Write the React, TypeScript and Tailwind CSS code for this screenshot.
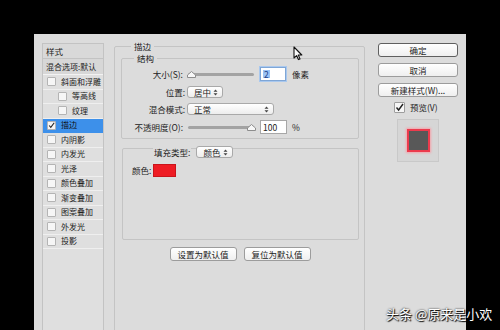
import React from 'react';

type LayerStyle = { label: string; indent?: boolean; checked?: boolean; active?: boolean };

const layerStyles: LayerStyle[] = [
  { label: '斜面和浮雕' },
  { label: '等高线', indent: true },
  { label: '纹理', indent: true },
  { label: '描边', checked: true, active: true },
  { label: '内阴影' },
  { label: '内发光' },
  { label: '光泽' },
  { label: '颜色叠加' },
  { label: '渐变叠加' },
  { label: '图案叠加' },
  { label: '外发光' },
  { label: '投影' },
];

const CheckMark = () => (
  <svg width="9" height="9" viewBox="0 0 9 9" className="block">
    <path d="M1.5 4.5 L3.6 7 L8 1" fill="none" stroke="#222" strokeWidth="1.4" />
  </svg>
);

const Checkbox = ({ checked }: { checked?: boolean }) => (
  <span className="w-[9px] h-[9px] shrink-0 flex items-center justify-center border border-[#b4b4b4] bg-[#f6f6f6] rounded-[1px]">
    {checked && <CheckMark />}
  </span>
);

const UpDown = () => (
  <svg width="5" height="7" viewBox="0 0 5 7" className="block">
    <path d="M2.5 0.5 L4.5 2.8 L0.5 2.8 Z M2.5 6.5 L4.5 4.2 L0.5 4.2 Z" fill="#444" />
  </svg>
);

const Select = ({ value, className }: { value: string; className: string }) => (
  <div
    className={`h-[12px] flex items-center justify-between pl-[6px] pr-[4px] border border-[#a9a9a9] rounded-[3px] bg-gradient-to-b from-white to-[#ededed] text-[8.5px] leading-none text-[#222] ${className}`}
  >
    <span>{value}</span>
    <UpDown />
  </div>
);

const Slider = ({ thumbAtEnd }: { thumbAtEnd?: boolean }) => (
  <div className="relative ml-[3px] w-[66px] h-[3px] bg-[#a3a3a3] rounded-full">
    <svg
      width="9"
      height="7"
      viewBox="0 0 9 7"
      className={`absolute top-[-2px] ${thumbAtEnd ? 'right-[-2px]' : 'left-[-1px]'}`}
    >
      <path d="M4.5 0.5 L8.5 4 L8.5 6.5 L0.5 6.5 L0.5 4 Z" fill="#f7f7f7" stroke="#8d8d8d" strokeWidth="1" />
    </svg>
  </div>
);

const PushButton = ({ label, primary, className }: { label: string; primary?: boolean; className: string }) => (
  <div
    className={`h-[14px] flex items-center justify-center rounded-[3px] border bg-gradient-to-b from-white to-[#efefef] text-[8.5px] leading-none text-[#222] ${
      primary ? 'border-[#5f5f5f]' : 'border-[#9c9c9c]'
    } ${className}`}
  >
    {label}
  </div>
);

const Cursor = () => (
  <svg width="10" height="15" viewBox="0 0 10 15" className="absolute left-[293px] top-[46px]">
    <path d="M1 1 L1 12 L3.6 9.6 L5.4 13.6 L7 12.9 L5.3 9 L8.8 9 Z" fill="#fafafa" stroke="#111" strokeWidth="1.1" strokeLinejoin="round" />
  </svg>
);

export default function App() {
  return (
    <div className="relative w-[500px] h-[330px] overflow-hidden bg-black pt-[34px] pl-[34px] font-['Noto_Sans_CJK_SC','Liberation_Sans',sans-serif] text-[#222]">
      <div className="w-[432px] h-[310px] bg-[#dcdcdc] flex">
        {/* style list */}
        <div className="ml-[8px] mt-[9px] w-[62px] shrink-0 border-x border-[#c3c3c3] border-t bg-[#dfdfdf]">
          <div className="h-[15px] flex items-center pl-[3px] text-[8.5px] leading-none border-b border-[#c3c3c3] bg-[#d9d9d9]">
            样式
          </div>
          <div className="h-[16px] flex items-center pl-[3px] text-[8px] leading-none border-b border-[#f2f2f2] bg-[#d7d7d7]">
            混合选项:默认
          </div>
          {layerStyles.map((s) => (
            <div
              key={s.label}
              className={`h-[14.5px] flex items-center gap-[5px] text-[8px] leading-none border-b ${
                s.active ? 'bg-[#3d90ea] border-[#3d90ea] text-[#111]' : 'border-[#efefef]'
              } ${s.indent ? 'pl-[15px]' : 'pl-[4px]'}`}
            >
              <Checkbox checked={s.checked} />
              <span>{s.label}</span>
            </div>
          ))}
        </div>

        {/* stroke group */}
        <fieldset className="ml-[10px] mt-[6px] w-[251px] shrink-0 border border-[#c4c4c4] rounded-[2px] pl-[6px] pr-[5px]">
          <legend className="ml-[10px] px-[3px] h-[12px] text-[8.5px] leading-[12px]">描边</legend>

          <fieldset className="border border-[#c4c4c4] rounded-[2px] pb-[4px]">
            <legend className="ml-[12px] px-[3px] h-[12px] text-[8.5px] leading-[12px]">结构</legend>
            <div className="flex flex-col pt-[3px] text-[8.5px] leading-none">
              <div className="h-[14px] flex items-center">
                <span className="w-[63px] text-right pr-[2px]">大小(S):</span>
                <Slider />
                <div className="ml-[6px] w-[26px] h-[14px] flex items-center pl-[2px] border border-[#7fa6d6] bg-white shadow-[0_0_0_1px_#a9c8ee]">
                  <span className="bg-[#9ac3f5] text-[#1c3f8a] px-[1px]">2</span>
                </div>
                <span className="ml-[6px]">像素</span>
              </div>
              <div className="h-[14px] mt-[4px] flex items-center">
                <span className="w-[65px] text-right pr-[2px]">位置:</span>
                <Select value="居中" className="w-[36px]" />
              </div>
              <div className="h-[14px] mt-[3px] flex items-center">
                <span className="w-[65px] text-right pr-[2px]">混合模式:</span>
                <Select value="正常" className="w-[87px]" />
              </div>
              <div className="h-[14px] mt-[4px] flex items-center">
                <span className="w-[63px] text-right pr-[2px] whitespace-nowrap">不透明度(O):</span>
                <Slider thumbAtEnd />
                <div className="ml-[6px] w-[27px] h-[14px] flex items-center pl-[2px] border border-[#a7a7a7] bg-white">
                  100
                </div>
                <span className="ml-[5px]">%</span>
              </div>
            </div>
          </fieldset>

          <div className="mt-[9px] ml-[1px] h-[92px] border border-[#c4c4c4] rounded-[2px]">
            <div className="-mt-[3px] ml-[30px] flex items-center text-[8.5px] leading-none">
              <span className="bg-[#dcdcdc] px-[1px]">填充类型:</span>
              <Select value="颜色" className="ml-[5px] w-[37px]" />
            </div>
            <div className="mt-[6px] ml-[9px] flex items-center text-[8.5px] leading-none">
              <span>颜色:</span>
              <span className="ml-[2px] w-[23px] h-[13px] bg-[#ee1c24] border border-[#c9141b]" />
            </div>
          </div>

          <div className="mt-[7px] flex justify-center gap-[7px]">
            <PushButton label="设置为默认值" className="w-[67px] h-[13px]" />
            <PushButton label="复位为默认值" className="w-[67px] h-[13px]" />
          </div>
        </fieldset>

        {/* right buttons */}
        <div className="ml-[13px] mt-[9px] w-[80px] shrink-0 flex flex-col">
          <PushButton label="确定" primary className="w-[80px]" />
          <PushButton label="取消" className="w-[80px] mt-[6px]" />
          <PushButton label="新建样式(W)..." className="w-[80px] mt-[6px]" />
          <div className="mt-[4px] ml-[16px] h-[12px] flex items-center gap-[5px] text-[8.5px] leading-none">
            <span className="w-[11px] h-[11px] flex items-center justify-center border border-[#9d9d9d] bg-[#f6f6f6] rounded-[1px]">
              <CheckMark />
            </span>
            <span>预览(V)</span>
          </div>
          <div className="mt-[6px] mx-auto w-[42px] h-[43px] flex items-center justify-center border border-[#c9c9c9] bg-[#d6d6d6]">
            <div className="w-[23px] h-[23px] bg-[#585858] border-2 border-[#ec3b4d] shadow-[0_0_2px_1px_#f5a3ab]" />
          </div>
        </div>
      </div>

      <Cursor />

      <div className="absolute left-[386px] top-[305px] text-[13px] leading-[18px] text-white [text-shadow:0_0_2px_#000,1px_1px_1px_#000] whitespace-nowrap">
        头条 @原来是小欢
      </div>
    </div>
  );
}
